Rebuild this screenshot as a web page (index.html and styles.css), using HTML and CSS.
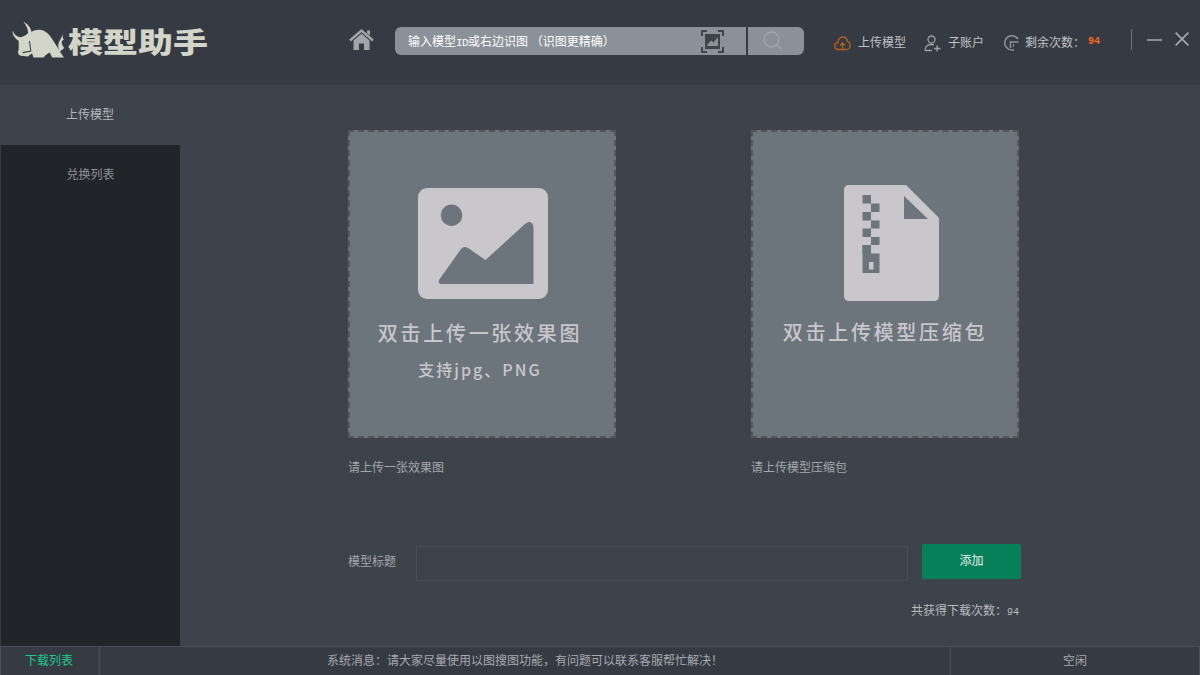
FILE: index.html
```html
<!DOCTYPE html>
<html lang="zh-CN">
<head>
<meta charset="utf-8">
<title>模型助手</title>
<link rel="stylesheet" href="styles.css">
</head>
<body>
<div class="app">
  <header class="topbar">
    <div class="logo">
      <svg class="bull" viewBox="10 10 158 96" preserveAspectRatio="none" aria-hidden="true">
        <path fill="#d3d5c8" d="M12 35C16 45 24 50 34 52C44 52 52 46 58 42C58 30 52 20 44 12C56 16 66 28 68 38C80 32 96 30 110 38C128 48 142 76 165 105L130 105L122 92C114 96 108 100 104 105L74 105L70 94C64 96 60 100 58 102L36 100C28 98 26 90 30 84L30 62C20 55 10 46 12 35Z"/>
        <path fill="#d3d5c8" d="M148 78C146 64 156 60 167 34C162 46 158 52 165 58C154 62 158 72 166 80L152 90Z"/>
        <path fill="none" stroke="#353a43" stroke-width="3" d="M62 62L66 88L42 92"/>
      </svg>
      <span class="logo-text">模型助手</span>
    </div>
    <svg class="home" viewBox="0 0 25 21" aria-hidden="true">
      <path fill="#a3a5a8" d="M4.500 11.500L12.500 4.500L20.500 11.500V21H15V14.500H10V21H4.500Z"/>
      <path fill="none" stroke="#a3a5a8" stroke-width="2.400" d="M1 11.500L12.500 1.600L24 11.500"/>
      <path fill="#a3a5a8" d="M18 1.500H21V6.500L18 4Z"/>
    </svg>
    <div class="search">
      <div class="search-input">
        <span class="search-text">输入模型<span class="half id">ID</span>或右边识图 （识图更精确）</span>
        <svg class="scan" viewBox="0 0 23 23" aria-hidden="true">
          <path fill="none" stroke="#3f444b" stroke-width="2" d="M1 6V1H6M17 1H22V6M22 17V22H17M6 22H1V17"/>
          <rect x="4" y="4" width="15" height="15" fill="#3f444b"/>
          <path fill="#8a9198" d="M5.500 16L10 10.500L12.500 12.500L17 7V16Z"/>
        </svg>
      </div>
      <button class="search-btn" type="button" aria-label="搜索">
        <svg viewBox="0 0 20 20" aria-hidden="true">
          <circle cx="8.500" cy="8.500" r="7.500" fill="none" stroke="#a1a6aa" stroke-width="1.300"/>
          <path stroke="#a1a6aa" stroke-width="1.300" d="M14 14L18.500 18"/>
        </svg>
      </button>
    </div>
    <nav class="tools">
      <a class="tool tool-upload">
        <svg class="tool-icon" viewBox="0 0 17 15" aria-hidden="true">
          <path fill="none" stroke="#b9621e" stroke-width="1.300" d="M4.500 13.500C2 13.500 .8 11.800 .8 10C.8 8 2.300 6.800 3.800 6.700C4 3.200 6.300 1 8.800 1C11.300 1 13 3 13.300 5.300C15 5.600 16.200 7.500 16.200 9.500C16.200 11.800 14.500 13.500 12.500 13.500Z"/>
          <path fill="none" stroke="#b9621e" stroke-width="1.300" d="M8.500 13V7.500M6 9.500L8.500 7L11 9.500"/>
        </svg>
        上传模型
      </a>
      <a class="tool tool-user">
        <svg class="tool-icon" viewBox="0 0 17 17" aria-hidden="true">
          <circle cx="7.500" cy="4.500" r="3.500" fill="none" stroke="#a0a2a5" stroke-width="1.300"/>
          <path fill="none" stroke="#a0a2a5" stroke-width="1.300" d="M1 15.500C1 11.500 3.500 9.500 7.500 9.500C8.500 9.500 9.500 9.700 10 10M1 15.500H8"/>
          <path stroke="#a0a2a5" stroke-width="1.500" d="M10 13.500H16.500M13.200 10.500V16.500"/>
        </svg>
        子账户
      </a>
      <a class="tool tool-count">
        <svg class="tool-icon" viewBox="0 0 16 18" aria-hidden="true">
          <path fill="none" stroke="#8f9296" stroke-width="1.500" d="M14 5A7.200 7.200 0 1 0 10 15.800"/>
          <path fill="none" stroke="#8f9296" stroke-width="1.500" d="M5.500 8H14.500M6.500 8V14"/>
          <path fill="none" stroke="#8f9296" stroke-width="1" d="M9.500 10V13"/>
        </svg>
        <span>剩余次数：</span><span class="count">94</span>
      </a>
    </nav>
    <div class="winctl">
      <span class="win-sep"></span>
      <svg class="win-min" viewBox="0 0 15 2" aria-hidden="true"><path stroke="#a6a8ab" stroke-width="1.500" d="M0 1H15"/></svg>
      <svg class="win-close" viewBox="0 0 14 14" aria-hidden="true"><path stroke="#a6a8ab" stroke-width="1.700" d="M.6 .6L13.400 13.400M13.400 .6L.6 13.400"/></svg>
    </div>
  </header>

  <div class="body">
    <aside class="sidebar">
      <div class="side-item active">上传模型</div>
      <div class="side-item">兑换列表</div>
    </aside>
    <main class="main">
      <div class="uploads">
        <section class="upload">
          <div class="zone">
            <svg class="zone-icon pic" viewBox="0 0 130 111" aria-hidden="true">
              <rect width="130" height="111" rx="9" fill="#c9c7cc"/>
              <circle cx="33.500" cy="27.300" r="10.700" fill="#6c747c"/>
              <path fill="#6c747c" d="M21 92C20 96 22 96 24 96H115.500V40C115.500 34 111 32 107 36L67.500 72L50 60C47 58 45 59 43 61Z"/>
            </svg>
            <div class="zone-title">双击上传一张效果图</div>
            <div class="zone-sub">支持jpg、PNG</div>
          </div>
          <div class="hint">请上传一张效果图</div>
        </section>
        <section class="upload">
          <div class="zone">
            <svg class="zone-icon zip" viewBox="0 0 96 116" aria-hidden="true">
              <path fill="#c9c7cc" fill-rule="evenodd" d="M5 0H62L95 33V111C95 114 93 116 90 116H5C2 116 0 114 0 111V5C0 2 2 0 5 0ZM60 11V34H84Z"/>
              <g fill="#6c747c">
                <rect x="18.500" y="10" width="8.500" height="8.500"/>
                <rect x="27" y="18.500" width="8.500" height="8.500"/>
                <rect x="18.500" y="27" width="8.500" height="8.500"/>
                <rect x="27" y="35.500" width="8.500" height="8"/>
                <rect x="18.500" y="43.500" width="8.500" height="8.500"/>
                <rect x="27" y="52" width="8.500" height="8"/>
                <rect x="18.500" y="60" width="8.500" height="8.500"/>
                <path fill-rule="evenodd" d="M18.500 60H27V68.500H35.500V88H18.500ZM25 77V84.500H29.500V77Z"/>
              </g>
            </svg>
            <div class="zone-title zip-title">双击上传模型压缩包</div>
          </div>
          <div class="hint">请上传模型压缩包</div>
        </section>
      </div>
      <form class="title-form">
        <label class="title-label" for="title">模型标题</label>
        <input class="title-input" id="title" type="text">
        <button class="add-btn" type="button">添加</button>
      </form>
      <div class="total">共获得下载次数：<span class="half">94</span></div>
    </main>
  </div>

  <footer class="status">
    <div class="status-left">下载列表</div>
    <div class="status-msg">系统消息：请大家尽量使用以图搜图功能，有问题可以联系客服帮忙解决！</div>
    <div class="status-right">空闲</div>
  </footer>
</div>
</body>
</html>
```

FILE: styles.css
```css
* { box-sizing: border-box; }
html, body { margin: 0; height: 100%; overflow: hidden; }
body {
  font-family: "Noto Sans CJK SC", "Liberation Sans", sans-serif;
  font-size: 12px;
  background: #3c434b;
  color: #b5b8bb;
}
svg { display: block; flex: none; }
.half { font-family: "Liberation Mono", monospace; font-size: 10px; }
.half.id { font-size: 11px; letter-spacing: -.6px; }

.app {
  width: 1200px;
  height: 675px;
  display: grid;
  grid-template-rows: 85px 1fr 29px;
}

/* top bar */
.topbar {
  background: #353a43;
  display: flex;
  align-items: flex-start;
  padding-left: 12px;
}
.logo {
  width: 337px;
  display: flex;
  align-items: flex-start;
  padding-top: 21px;
}
.bull { width: 53px; height: 37px; }
.logo-text {
  margin: -4px 0 0 3px;
  font-size: 35px;
  line-height: 40px;
  font-weight: 900;
  color: #d3d5c8;
  white-space: nowrap;
  transform: scaleY(.8);
  transform-origin: center bottom;
}
.home { width: 25px; height: 21px; margin-top: 29px; }
.search { display: flex; margin: 27px 0 0 21px; height: 28px; gap: 2px; }
.search-input {
  width: 351px;
  background: #8a9198;
  border-radius: 6px 0 0 6px;
  display: flex;
  align-items: center;
  justify-content: space-between;
  padding: 0 22px 2px 13px;
  color: #fff;
}
.search-btn {
  width: 56px;
  padding: 0;
  border: 0;
  background: #8a9198;
  border-radius: 0 6px 6px 0;
  display: flex;
  align-items: center;
  justify-content: center;
}
.search-btn svg { width: 20px; height: 20px; margin-left: -6px; }
.scan { width: 23px; height: 23px; margin-top: 2px; }
.search-text { white-space: pre; }

.tools { display: flex; margin: 31px 0 0 30px; gap: 18px; }
.tool { display: flex; align-items: center; height: 20px; color: #c0c2c5; white-space: nowrap; }
.tool-icon { margin-right: 7px; }
.tool-upload .tool-icon { width: 17px; height: 15px; margin-top: 4px; }
.tool-user .tool-icon { width: 17px; height: 17px; margin-top: 4px; }
.tool-count { margin-left: 2px; }
.tool-count .tool-icon { width: 16px; height: 18px; margin: 4px 5px 0 0; }
.count {
  margin-left: 3px;
  font-family: "Liberation Mono", monospace;
  font-size: 10px;
  font-weight: 700;
  color: #f56a20;
}
.winctl { display: flex; align-items: center; margin: 29px 0 0 31px; height: 21px; }
.win-sep { width: 1px; height: 21px; background: #6f7379; }
.win-min { width: 15px; height: 2px; margin: 0 13px 0 15px; }
.win-close { width: 14px; height: 14px; margin-bottom: 1px; }

/* body */
.body { display: flex; min-height: 0; }
.sidebar {
  width: 180px;
  background: #212429;
  border-left: 1px solid #343a40;
}
.side-item {
  height: 60px;
  display: flex;
  align-items: center;
  justify-content: center;
  padding-bottom: 3px;
  color: #8f9296;
}
.side-item.active { background: #3c434b; color: #b5b8bb; margin-left: -1px; }

.main {
  flex: 1;
  padding: 45px 0 0 168px;
  display: flex;
  flex-direction: column;
}
.uploads { display: flex; gap: 135px; }
.upload { width: 268px; }
.zone {
  height: 308px;
  background: #6c747c;
  border: 2px dashed #545659;
  display: flex;
  flex-direction: column;
  align-items: center;
  padding-top: 56px;
  color: #c9c7cc;
}
.zone-icon.pic { width: 130px; height: 111px; margin-left: 1px; }
.zone-icon.zip { width: 96px; height: 116px; margin: -3px 0 0 14px; }
.zone-title {
  margin: 19px 0 0 -4px;
  font-size: 20px;
  line-height: 30px;
  letter-spacing: 2.7px;
  font-weight: 500;
  white-space: nowrap;
}
.zip-title { margin: 16px 0 0 0; }
.zone-sub {
  margin: 10px 0 0 -4px;
  font-size: 16px;
  line-height: 22px;
  letter-spacing: 2px;
  font-weight: 500;
}
.hint { margin-top: 21px; line-height: 16px; color: #a5a8ab; }

.title-form {
  display: flex;
  align-items: flex-start;
  margin-top: 69px;
  width: 673px;
}
.title-label { width: 68px; line-height: 29px; margin-top: 2px; color: #a5a8ab; }
.title-input {
  width: 492px;
  height: 35px;
  margin-top: 2px;
  background: transparent;
  border: 1px solid #494f57;
}
.add-btn {
  width: 99px;
  height: 35px;
  margin-left: 14px;
  padding: 0 0 4px;
  border: 0;
  border-radius: 2px;
  background: #07805a;
  color: #e9efec;
  font: inherit;
}
.total {
  width: 671px;
  margin-top: 20px;
  text-align: right;
  line-height: 18px;
  color: #b9bcbf;
}

/* status */
.status {
  background: #353a43;
  border-top: 1px solid #4a4f58;
  display: flex;
  text-align: center;
  line-height: 26px;
}
.status-left {
  width: 100px;
  padding-right: 2px;
  border-left: 1px solid #4a4f58;
  border-right: 1px solid #4a4f58;
  color: #1fc98b;
}
.status-msg { flex: 1; color: #a8abaf; }
.status-right {
  width: 250px;
  border-left: 1px solid #4a4f58;
  border-right: 1px solid #4a4f58;
  color: #a8abaf;
}
```
